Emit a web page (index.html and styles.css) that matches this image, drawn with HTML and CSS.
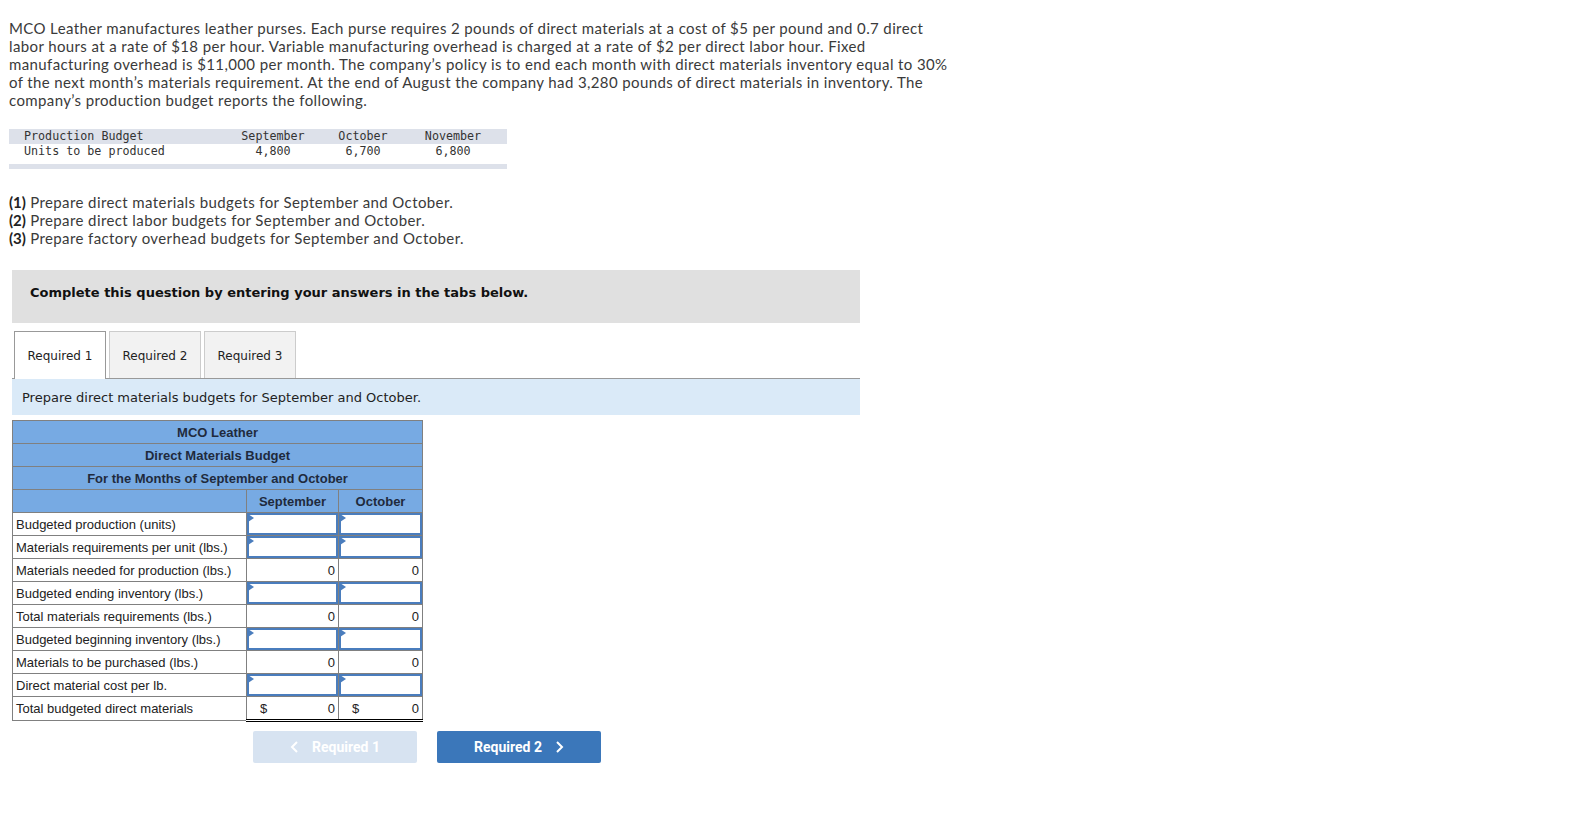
FILE: index.html
```html
<!DOCTYPE html>
<html lang="en">
<head>
  <meta charset="UTF-8" />
  <title>MCO Leather – Direct Materials Budget</title>
  <link rel="stylesheet" href="styles.css">
</head>
<body>

  <div class="question">
    <p class="intro">MCO Leather manufactures leather purses. Each purse requires 2 pounds of direct materials at a cost of $5 per pound and 0.7 direct labor hours at a rate of $18 per hour. Variable manufacturing overhead is charged at a rate of $2 per direct labor hour. Fixed manufacturing overhead is $11,000 per month. The company’s policy is to end each month with direct materials inventory equal to 30% of the next month’s materials requirement. At the end of August the company had 3,280 pounds of direct materials in inventory. The company’s production budget reports the following.</p>

    <table class="given">
      <colgroup>
        <col class="c-label">
        <col class="c-month">
        <col class="c-month">
        <col class="c-month">
        <col class="c-pad">
      </colgroup>
      <tr class="given-head">
        <td class="given-label">Production Budget</td>
        <td>September</td>
        <td>October</td>
        <td>November</td>
        <td></td>
      </tr>
      <tr>
        <td class="given-label">Units to be produced</td>
        <td>4,800</td>
        <td>6,700</td>
        <td>6,800</td>
        <td></td>
      </tr>
    </table>
    <div class="given-foot"></div>

    <div class="tasks">
      <div><b>(1)</b> Prepare direct materials budgets for September and October.</div>
      <div><b>(2)</b> Prepare direct labor budgets for September and October.</div>
      <div><b>(3)</b> Prepare factory overhead budgets for September and October.</div>
    </div>
  </div>

  <div class="workspace">
    <div class="notice">Complete this question by entering your answers in the tabs below.</div>

    <div class="tabs">
      <div class="tab active">Required 1</div>
      <div class="tab">Required 2</div>
      <div class="tab">Required 3</div>
    </div>

    <div class="tab-intro">Prepare direct materials budgets for September and October.</div>

    <table class="budget">
      <tr class="title"><td colspan="3">MCO Leather</td></tr>
      <tr class="title"><td colspan="3">Direct Materials Budget</td></tr>
      <tr class="title"><td colspan="3">For the Months of September and October</td></tr>
      <tr class="title cols">
        <td class="label"></td>
        <td class="month">September</td>
        <td class="month">October</td>
      </tr>
      <tr>
        <td class="label">Budgeted production (units)</td>
        <td class="entry"><span class="box"></span></td>
        <td class="entry"><span class="box"></span></td>
      </tr>
      <tr>
        <td class="label">Materials requirements per unit (lbs.)</td>
        <td class="entry"><span class="box"></span></td>
        <td class="entry"><span class="box"></span></td>
      </tr>
      <tr class="calc">
        <td class="label">Materials needed for production (lbs.)</td>
        <td class="num">0</td>
        <td class="num">0</td>
      </tr>
      <tr>
        <td class="label">Budgeted ending inventory (lbs.)</td>
        <td class="entry"><span class="box"></span></td>
        <td class="entry"><span class="box"></span></td>
      </tr>
      <tr class="calc">
        <td class="label">Total materials requirements (lbs.)</td>
        <td class="num">0</td>
        <td class="num">0</td>
      </tr>
      <tr>
        <td class="label">Budgeted beginning inventory (lbs.)</td>
        <td class="entry"><span class="box"></span></td>
        <td class="entry"><span class="box"></span></td>
      </tr>
      <tr class="calc">
        <td class="label">Materials to be purchased (lbs.)</td>
        <td class="num">0</td>
        <td class="num">0</td>
      </tr>
      <tr>
        <td class="label">Direct material cost per lb.</td>
        <td class="entry"><span class="box"></span></td>
        <td class="entry"><span class="box"></span></td>
      </tr>
      <tr class="calc total">
        <td class="label">Total budgeted direct materials</td>
        <td class="num"><span class="cur">$</span>0</td>
        <td class="num"><span class="cur">$</span>0</td>
      </tr>
    </table>

    <div class="nav">
      <button class="nav-btn prev" disabled>
        <svg width="10" height="12" viewBox="0 0 10 12"><path d="M7 1 L2 6 L7 11" fill="none" stroke="currentColor" stroke-width="2"/></svg>
        Required 1
      </button>
      <button class="nav-btn next">
        Required 2
        <svg width="10" height="12" viewBox="0 0 10 12"><path d="M3 1 L8 6 L3 11" fill="none" stroke="currentColor" stroke-width="2"/></svg>
      </button>
    </div>
  </div>

</body>
</html>
```

FILE: styles.css
```css
body {
  margin: 0;
  padding: 0;
  background: #fff;
  color: #3a3a3a;
  font-family: 'Lato', sans-serif;
}

.question {
  padding: 19px 0 0 9px;
}

.intro {
  margin: 0;
  width: 945px;
  font-size: 15px;
  line-height: 18px;
  letter-spacing: 0.38px;
}

/* small given-data table */
.given {
  margin-top: 20px;
  width: 498px;
  table-layout: fixed;
  border-collapse: collapse;
  font-family: 'DejaVu Sans Mono', monospace;
  font-size: 11.7px;
  color: #333;
}

.c-label { width: 219px; }
.c-month { width: 90px; }
.c-pad { width: 9px; }

.given td {
  height: 15px;
  padding: 0;
  line-height: 15px;
  text-align: center;
  white-space: nowrap;
}

.given td.given-label {
  text-align: left;
  padding-left: 15px;
}

.given-head {
  background: #dde1ea;
}

.given-foot {
  width: 498px;
  height: 5px;
  margin-top: 5px;
  background: #dde1ea;
}

.tasks {
  margin-top: 24px;
  font-size: 15px;
  line-height: 18px;
  letter-spacing: 0.4px;
}

.tasks b {
  color: #222;
  letter-spacing: 0;
}

/* answer area */
.workspace {
  padding: 23px 0 40px 12px;
}

.notice {
  width: 848px;
  height: 53px;
  box-sizing: border-box;
  padding: 15px 0 0 18px;
  background: #e0e0e0;
  font-family: 'DejaVu Sans', sans-serif;
  font-weight: bold;
  font-size: 13px;
  color: #111;
}

.tabs {
  display: flex;
  gap: 3px;
  margin-top: 8px;
  padding-left: 2px;
  width: 846px;
  border-bottom: 1px solid #999;
}

.tab {
  width: 92px;
  height: 47px;
  box-sizing: border-box;
  border: 1px solid #ccc;
  border-bottom: none;
  background: #f2f2f2;
  font-family: 'DejaVu Sans', sans-serif;
  font-size: 12px;
  color: #222;
  line-height: 48px;
  text-align: center;
}

.tab.active {
  background: #fff;
  border-color: #999;
  margin-bottom: -1px;
  height: 48px;
}

.tab-intro {
  width: 848px;
  height: 36px;
  box-sizing: border-box;
  padding-left: 10px;
  line-height: 37px;
  background: #daeaf8;
  font-family: 'DejaVu Sans', sans-serif;
  font-size: 13px;
  color: #222;
}

/* budget worksheet */
.budget {
  margin-top: 5px;
  border-collapse: collapse;
  font-family: 'Liberation Sans', Arial, sans-serif;
  font-size: 13px;
  color: #222;
}

.budget td {
  height: 22px;
  padding: 0;
  border: 1px solid #808080;
}

.budget .title td {
  background: #77aae3;
  text-align: center;
  font-weight: bold;
  color: #1f2a3d;
}

.budget .label {
  width: 230px;
  padding-left: 3px;
  background: #fff;
  white-space: nowrap;
}

.budget .title .label {
  background: #77aae3;
}

.budget .month {
  width: 91px;
}

.budget .month + .month {
  width: 83px;
}

.budget td.entry {
  padding: 0;
}

.box {
  display: block;
  height: 22px;
  box-sizing: border-box;
  border: 2px solid #4a7dbd;
  position: relative;
}

.box::before {
  content: "";
  position: absolute;
  left: -1px;
  top: -1px;
  border-top: 4px solid transparent;
  border-bottom: 4px solid transparent;
  border-left: 6px solid #4a7dbd;
}

.budget .num {
  text-align: right;
  padding-right: 3px;
}

.budget .calc .num {
  border-top: 1px solid #000;
}

.budget .total .num {
  border-bottom: 3px double #000;
}

.cur {
  float: left;
  padding-left: 13px;
}

.nav {
  display: flex;
  gap: 20px;
  margin-top: 9px;
  padding-left: 241px;
}

.nav-btn {
  width: 164px;
  height: 32px;
  border: none;
  border-radius: 2px;
  font-family: 'Roboto', sans-serif;
  font-weight: bold;
  font-size: 14px;
  color: #fff;
  display: flex;
  align-items: center;
  justify-content: center;
  gap: 12px;
}

.nav-btn.prev {
  background: #d7e3f1;
}

.nav-btn.next {
  background: #3b77ba;
}
```
